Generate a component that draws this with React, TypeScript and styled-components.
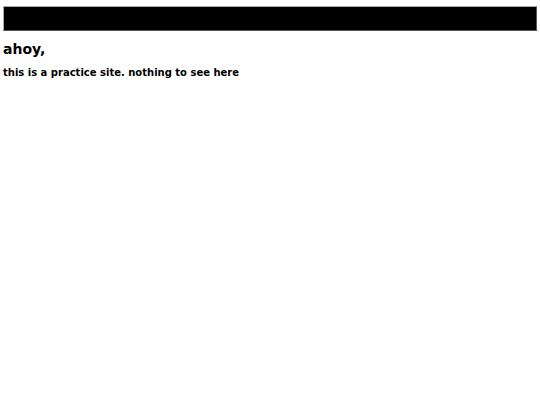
import React from "react";
import styled, { createGlobalStyle } from "styled-components";

const GlobalStyle = createGlobalStyle`
  body {
    margin: 0;
    padding: 6px 3px;
    background: #fff;
    color: #000;
    font-family: "DejaVu Sans", Verdana, sans-serif;
  }
`;

export default function App() {
  return (
    <>
      <GlobalStyle />
      <Header />
      <Title>ahoy,</Title>
      <Message>this is a practice site. nothing to see here</Message>
    </>
  );
}

const Header = styled.div`
  height: 23px;
  background: #000;
  border: 1px solid;
  border-color: #aaa #555 #555 #aaa;
`;

const Title = styled.h1`
  font-size: 14px;
  font-weight: bold;
  margin: 10px 0 0 0;
  line-height: 16px;
`;

const Message = styled.p`
  font-size: 10px;
  font-weight: bold;
  margin: 10px 0 0 0;
  line-height: 12px;
`;
